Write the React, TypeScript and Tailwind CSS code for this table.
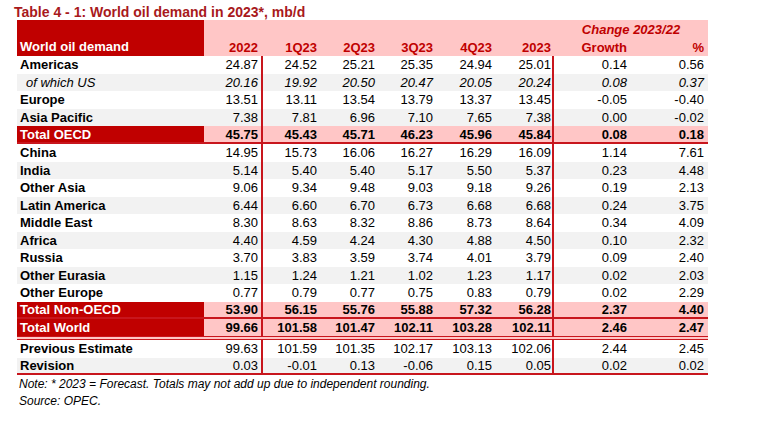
import React from 'react';

type Kind = 'white' | 'gray' | 'total';

interface RowDef {
  label: string;
  values: string[];
  kind: Kind;
  italic?: boolean;
  border?: string;
  height?: string;
}

const rows: RowDef[] = [
  { label: 'Americas', values: ['24.87', '24.52', '25.21', '25.35', '24.94', '25.01', '0.14', '0.56'], kind: 'white' },
  { label: 'of which US', values: ['20.16', '19.92', '20.50', '20.47', '20.05', '20.24', '0.08', '0.37'], kind: 'gray', italic: true },
  { label: 'Europe', values: ['13.51', '13.11', '13.54', '13.79', '13.37', '13.45', '-0.05', '-0.40'], kind: 'white' },
  { label: 'Asia Pacific', values: ['7.38', '7.81', '6.96', '7.10', '7.65', '7.38', '0.00', '-0.02'], kind: 'gray' },
  { label: 'Total OECD', values: ['45.75', '45.43', '45.71', '46.23', '45.96', '45.84', '0.08', '0.18'], kind: 'total', border: 'border-b-2 border-[#c8161d]', height: 'h-[18px]' },
  { label: 'China', values: ['14.95', '15.73', '16.06', '16.27', '16.29', '16.09', '1.14', '7.61'], kind: 'white' },
  { label: 'India', values: ['5.14', '5.40', '5.40', '5.17', '5.50', '5.37', '0.23', '4.48'], kind: 'gray' },
  { label: 'Other Asia', values: ['9.06', '9.34', '9.48', '9.03', '9.18', '9.26', '0.19', '2.13'], kind: 'white' },
  { label: 'Latin America', values: ['6.44', '6.60', '6.70', '6.73', '6.68', '6.68', '0.24', '3.75'], kind: 'gray' },
  { label: 'Middle East', values: ['8.30', '8.63', '8.32', '8.86', '8.73', '8.64', '0.34', '4.09'], kind: 'white' },
  { label: 'Africa', values: ['4.40', '4.59', '4.24', '4.30', '4.88', '4.50', '0.10', '2.32'], kind: 'gray' },
  { label: 'Russia', values: ['3.70', '3.83', '3.59', '3.74', '4.01', '3.79', '0.09', '2.40'], kind: 'white' },
  { label: 'Other Eurasia', values: ['1.15', '1.24', '1.21', '1.02', '1.23', '1.17', '0.02', '2.03'], kind: 'gray' },
  { label: 'Other Europe', values: ['0.77', '0.79', '0.77', '0.75', '0.83', '0.79', '0.02', '2.29'], kind: 'white' },
  { label: 'Total Non-OECD', values: ['53.90', '56.15', '55.76', '55.88', '57.32', '56.28', '2.37', '4.40'], kind: 'total', border: 'border-b-2 border-[#c8161d]' },
  { label: 'Total World', values: ['99.66', '101.58', '101.47', '102.11', '103.28', '102.11', '2.46', '2.47'], kind: 'total', border: 'border-b-4 border-double border-[#c8161d]', height: 'h-[21px]' },
  { label: 'Previous Estimate', values: ['99.63', '101.59', '101.35', '102.17', '103.13', '102.06', '2.44', '2.45'], kind: 'white' },
  { label: 'Revision', values: ['0.03', '-0.01', '0.13', '-0.06', '0.15', '0.05', '0.02', '0.02'], kind: 'gray', border: 'border-b-2 border-[#c8161d]' },
];

// widths of the eight number columns, plus the red rule after 2022 and 2023
const cols = [
  'w-[59px] pr-[3px] border-r-2 border-[#c8161d]',
  'w-[58px] pr-[4px]',
  'w-[58px] pr-[4px]',
  'w-[58px] pr-[4px]',
  'w-[59px] pr-[4px]',
  'w-[58px] pr-[1px] border-r-2 border-[#c8161d]',
  'w-[77px] pr-[4px]',
  'w-[77px] pr-[4px]',
];

const headCols = ['w-[59px] pr-[5px]', 'w-[58px] pr-[4px]', 'w-[58px] pr-[4px]', 'w-[58px] pr-[4px]', 'w-[59px] pr-[4px]', 'w-[58px] pr-[3px]', 'w-[77px] pr-[4px]', 'w-[77px] pr-[4px]'];
const headLabels = ['2022', '1Q23', '2Q23', '3Q23', '4Q23', '2023', 'Growth', '%'];

function Row({ row }: { row: RowDef }) {
  const isTotal = row.kind === 'total';
  const rowBg = row.kind === 'gray' ? 'bg-[#f2f2f2]' : row.kind === 'total' ? 'bg-[#ffc6c6]' : 'bg-white';
  return (
    <div className={`flex ${row.height ?? 'h-[17.5px]'} ${rowBg} ${row.border ?? ''}`}>
      <div
        className={`w-[187px] flex items-center ${row.italic ? 'pl-[9px] italic' : 'pl-[3px] font-bold'} ${
          isTotal ? 'bg-[#c00000] text-white' : 'text-black'
        }`}
      >
        {row.label}
      </div>
      {row.values.map((v, i) => (
        <div
          key={i}
          className={`${cols[i]} flex items-center justify-end ${isTotal ? 'font-bold' : ''} ${row.italic ? 'italic' : ''}`}
        >
          {v}
        </div>
      ))}
    </div>
  );
}

export default function App() {
  return (
    <div className="w-[766px] h-[432px] bg-white text-black font-['Liberation_Sans',Arial,sans-serif] text-[13px] leading-none">
      <div className="pt-[4px] pl-[14px] h-[20px] text-[14px] leading-[16px] font-bold text-[#a8191c]">
        Table 4 - 1: World oil demand in 2023*, mb/d
      </div>

      <div className="ml-[17px] w-[691px]">
        {/* header */}
        <div className="flex h-[36px]">
          <div className="w-[187px] bg-[#c00000] text-white font-bold flex items-end pl-[3px] pb-[3px]">
            World oil demand
          </div>
          <div className="flex-1 bg-[#ffc6c6] flex flex-col text-[#c00000] font-bold">
            <div className="flex h-[18px] items-center">
              <div className="w-[350px]" />
              <div className="w-[154px] text-center italic">Change 2023/22</div>
            </div>
            <div className="flex h-[18px] items-center">
              {headLabels.map((h, i) => (
                <div key={h} className={`${headCols[i]} text-right`}>
                  {h}
                </div>
              ))}
            </div>
          </div>
        </div>

        {rows.map((r) => (
          <Row key={r.label} row={r} />
        ))}

        <div className="pl-[2px] pt-[1px] text-[12px] leading-[17px] italic text-black">
          <div>Note: * 2023 = Forecast. Totals may not add up due to independent rounding.</div>
          <div>Source: OPEC.</div>
        </div>
      </div>
    </div>
  );
}
